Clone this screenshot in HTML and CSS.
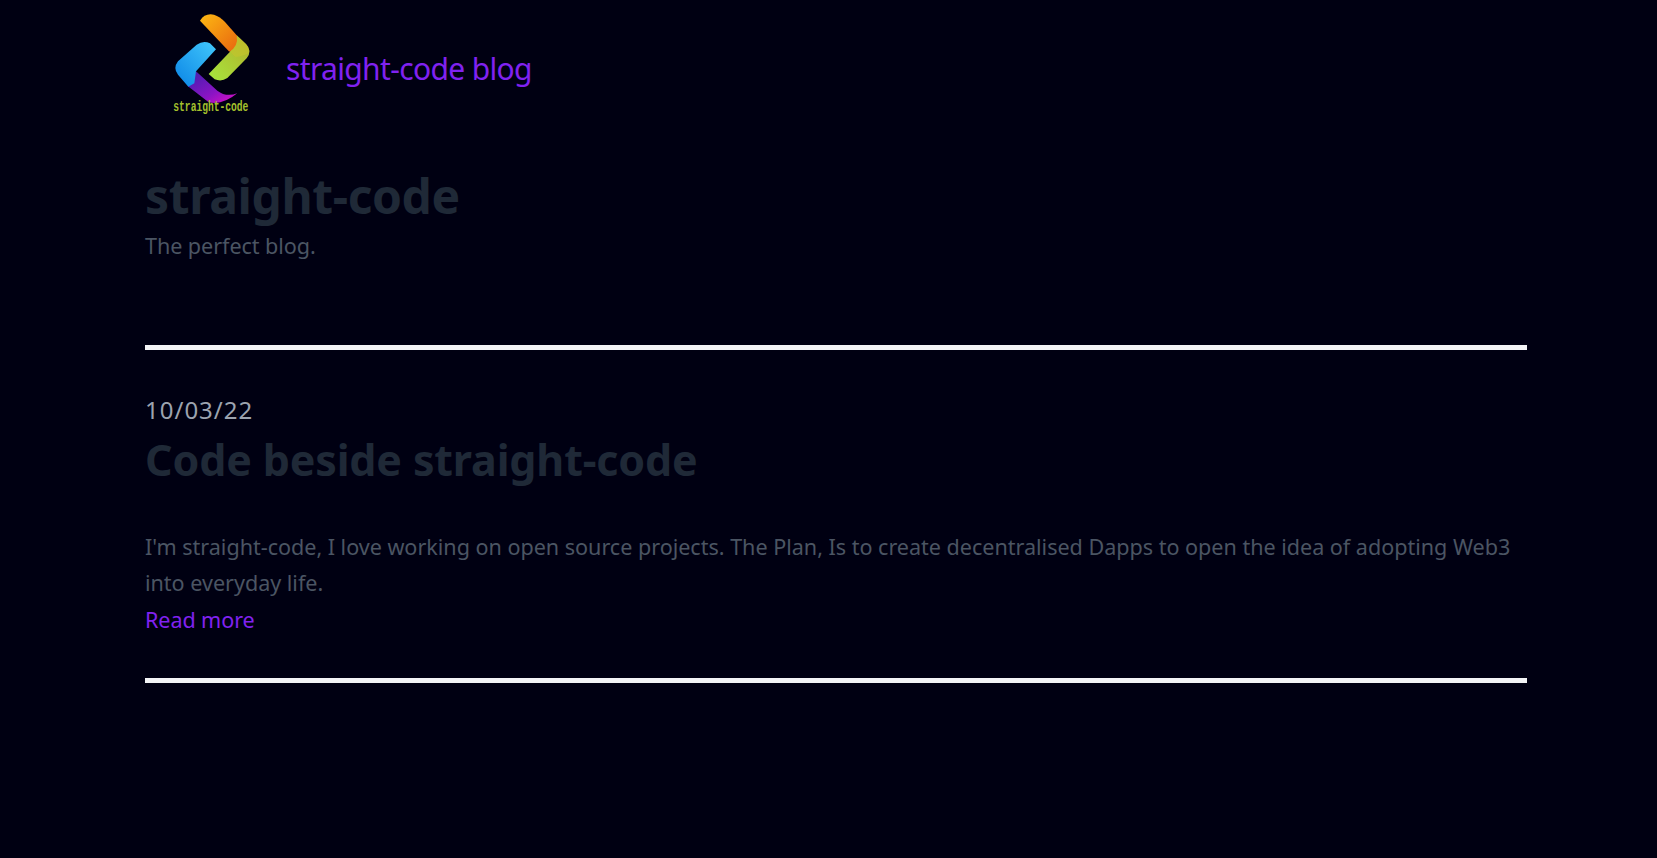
FILE: index.html
```html
<!DOCTYPE html>
<html lang="en">
<head>
<meta charset="utf-8">
<title>straight-code blog</title>
<link rel="stylesheet" href="styles.css">
</head>
<body>
<div class="page">
  <header class="site-header">
    <svg class="logo" viewBox="15 0 360 375" role="img" aria-label="straight-code logo">
      <defs>
        <linearGradient id="gOrange" x1="0" y1="0" x2="1" y2="1"><stop offset="0" stop-color="#fdb913"/><stop offset="1" stop-color="#e8650f"/></linearGradient>
        <linearGradient id="gGreen" x1="1" y1="0" x2="0" y2="1"><stop offset="0" stop-color="#b3ad2a"/><stop offset="1" stop-color="#a6e83e"/></linearGradient>
        <linearGradient id="gBlue" x1="1" y1="0" x2="0" y2="1"><stop offset="0" stop-color="#42c8fb"/><stop offset="1" stop-color="#0a84e6"/></linearGradient>
        <linearGradient id="gPurple" x1="0" y1="0" x2="1" y2="1"><stop offset="0" stop-color="#3f20ad"/><stop offset="0.6" stop-color="#8a14c4"/><stop offset="1" stop-color="#e410c8"/></linearGradient>
      </defs>
      <path fill="url(#gPurple)" d="M168 214 L143 258 L205 306 Q245 318 292 280 Q258 292 232 272 Z"/>
      <path fill="url(#gGreen)" d="M270 155 L290 106 L318 132 Q338 152 320 175 L262 234 Q245 246 224 238 L206 222 Z"/>
      <path fill="#c9c42c" opacity="0.55" d="M270 155 L290 106 L318 132 Q330 146 326 160 Q300 172 285 170 Z"/>
      <path fill="url(#gOrange)" d="M180 62 Q195 38 222 44 Q240 50 255 66 L290 106 Q296 140 268 155 Z"/>
      <path fill="url(#gBlue)" d="M228 148 L168 214 L163 250 L145 260 L114 224 Q98 205 114 184 L170 134 Q190 120 210 130 Z"/>
      <text class="logo-text" x="100" y="334" textLength="225" lengthAdjust="spacingAndGlyphs">straight-code</text>
    </svg>
    <a class="site-title" href="#">straight-code blog</a>
  </header>
  <section class="intro">
    <h1 class="intro-title">straight-code</h1>
    <p class="intro-sub">The perfect blog.</p>
  </section>
  <article class="post">
    <time class="post-date">10/03/22</time>
    <h2 class="post-title">Code beside straight-code</h2>
    <p class="post-body">I'm straight-code, I love working on open source projects. The Plan, Is to create decentralised Dapps to open the idea of adopting Web3 into everyday life.</p>
    <a class="post-link" href="#">Read more</a>
  </article>
</div>
</body>
</html>
```
FILE: styles.css
```css
html, body { margin: 0; padding: 0; }
body {
  background: #000012;
  font-family: "Noto Sans", "Open Sans", sans-serif;
  min-height: 100vh;
}
.page { width: 1382px; margin: 0 auto 0 145px; }
.site-header {
  display: flex;
  align-items: center;
  gap: 21px;
  height: 138px;
}
.logo { width: 120px; height: 125px; flex: none; align-self: flex-start; overflow: visible; }
.logo-text {
  font-family: "Liberation Mono", monospace;
  font-size: 42px;
  font-weight: 700;
  fill: #a4c02c;
}
.site-title {
  color: #8022f0;
  font-size: 30px;
  line-height: 36px;
  text-decoration: none;
  letter-spacing: -0.65px;
}
.intro { border-bottom: 5px solid #f3f4f6; padding-top: 34px; height: 173px; }
.intro-title {
  margin: 0;
  color: #1f2937;
  font-size: 48px;
  line-height: 48px;
  font-weight: 700;
  letter-spacing: -0.4px;
}
.intro-sub {
  margin: 10px 0 0;
  color: #4b5563;
  font-size: 21.6px;
  line-height: 32px;
  letter-spacing: -0.07px;
}
.post { padding-top: 44px; border-bottom: 5px solid #f3f4f6; height: 284px; }
.post-date {
  display: block;
  color: #9ca3af;
  font-size: 24px;
  line-height: 32px;
  letter-spacing: 1px;
}
.post-title {
  margin: 4px 0 39px;
  color: #1f2937;
  font-size: 43px;
  line-height: 60px;
  font-weight: 700;
  letter-spacing: -0.16px;
}
.post-body {
  margin: 0;
  color: #4b5563;
  font-size: 21.6px;
  line-height: 36px;
  letter-spacing: -0.03px;
}
.post-link {
  display: block;
  margin-top: 1px;
  color: #8022f0;
  font-size: 21.6px;
  line-height: 36px;
  letter-spacing: -0.1px;
  text-decoration: none;
}
```
